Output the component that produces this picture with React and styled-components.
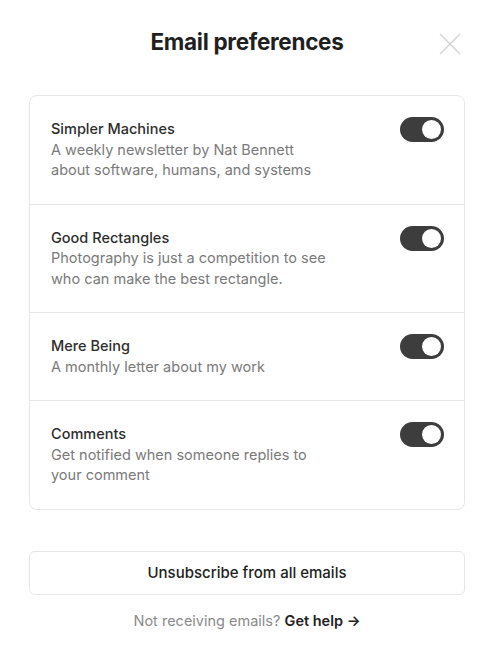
import React, { useState } from 'react';
import styled, { createGlobalStyle } from 'styled-components';

const Global = createGlobalStyle`
  body {
    margin: 0;
    background: #fff;
    font-family: Inter, "Noto Sans", sans-serif;
    -webkit-font-smoothing: antialiased;
  }
`;

const Modal = styled.div`
  width: 495px;
  height: 665px;
  box-sizing: border-box;
  padding: 23px 30px 0 29px;
  display: flex;
  flex-direction: column;
`;

const Header = styled.div`
  position: relative;
  display: flex;
  justify-content: center;
  align-items: center;
  height: 36px;
`;

const Title = styled.h1`
  margin: 0;
  font-size: 22.5px;
  font-weight: 700;
  letter-spacing: -0.3px;
  color: #1f1f1f;
`;

const Close = styled.button`
  position: absolute;
  right: 3px;
  top: 9px;
  width: 24px;
  height: 24px;
  padding: 0;
  border: 0;
  background: none;
  cursor: pointer;
`;

const List = styled.div`
  margin-top: 36px;
  border: 1px solid #e6e6e6;
  border-radius: 8px;
`;

const Row = styled.div`
  display: flex;
  justify-content: space-between;
  align-items: flex-start;
  padding: 23px 20px 23px 21px;
  & + & {
    border-top: 1px solid #e6e6e6;
  }
`;

const Text = styled.div`
  font-size: 14.5px;
  line-height: 20.5px;
`;

const Name = styled.div`
  font-weight: 500;
  color: #2d2d2d;
`;

const Desc = styled.div`
  color: #7a7a7a;
  max-width: 282px;
`;

const Track = styled.button`
  flex: none;
  margin-top: -2px;
  width: 44px;
  height: 25px;
  border-radius: 13px;
  border: 0;
  padding: 3px;
  background: ${p => (p.on ? '#3d3d3d' : '#d6d6d6')};
  display: flex;
  justify-content: ${p => (p.on ? 'flex-end' : 'flex-start')};
  cursor: pointer;
`;

const Knob = styled.span`
  width: 19px;
  height: 19px;
  border-radius: 50%;
  background: #fff;
`;

const Unsub = styled.button`
  margin-top: 41px;
  height: 44px;
  border: 1px solid #e6e6e6;
  border-radius: 6px;
  background: #fff;
  font-family: inherit;
  font-size: 15px;
  font-weight: 500;
  color: #222;
  cursor: pointer;
`;

const Footer = styled.p`
  margin: 17px 0 0;
  text-align: center;
  font-size: 14.5px;
  color: #8a8a8a;
  b {
    color: #222;
    font-weight: 600;
  }
`;

const lists = [
  { name: 'Simpler Machines', desc: 'A weekly newsletter by Nat Bennett about software, humans, and systems' },
  { name: 'Good Rectangles', desc: 'Photography is just a competition to see who can make the best rectangle.' },
  { name: 'Mere Being', desc: 'A monthly letter about my work' },
  { name: 'Comments', desc: 'Get notified when someone replies to your comment' }
];

export default () => {
  const [on, setOn] = useState(lists.map(() => true));
  return (
    <Modal>
      <Global />
      <Header>
        <Title>Email preferences</Title>
        <Close aria-label="Close">
          <svg width="24" height="24" viewBox="0 0 24 24">
            <path d="M2 2L22 22M22 2L2 22" stroke="#d0d0d0" strokeWidth="1.2" fill="none" />
          </svg>
        </Close>
      </Header>
      <List>
        {lists.map((l, i) => (
          <Row key={l.name}>
            <Text>
              <Name>{l.name}</Name>
              <Desc>{l.desc}</Desc>
            </Text>
            <Track
              on={on[i] ? 1 : 0}
              onClick={() => setOn(on.map((v, j) => (j === i ? !v : v)))}
            >
              <Knob />
            </Track>
          </Row>
        ))}
      </List>
      <Unsub>Unsubscribe from all emails</Unsub>
      <Footer>
        Not receiving emails? <b>Get help →</b>
      </Footer>
    </Modal>
  );
};
